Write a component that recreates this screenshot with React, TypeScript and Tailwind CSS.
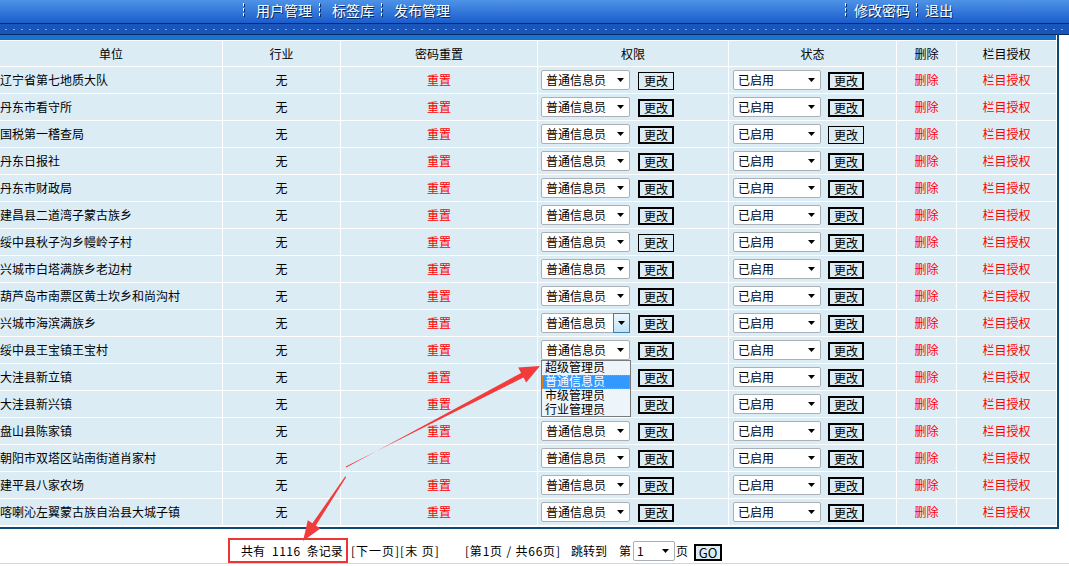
import React from "react";

const units = [
  "辽宁省第七地质大队",
  "丹东市看守所",
  "国税第一稽查局",
  "丹东日报社",
  "丹东市财政局",
  "建昌县二道湾子蒙古族乡",
  "绥中县秋子沟乡幔岭子村",
  "兴城市白塔满族乡老边村",
  "葫芦岛市南票区黄土坎乡和尚沟村",
  "兴城市海滨满族乡",
  "绥中县王宝镇王宝村",
  "大洼县新立镇",
  "大洼县新兴镇",
  "盘山县陈家镇",
  "朝阳市双塔区站南街道肖家村",
  "建平县八家农场",
  "喀喇沁左翼蒙古族自治县大城子镇",
];

const thickA = [false, true, true, true, true, true, false, true, true, true, true, true, true, true, true, true, true];
const thickB = [true, true, false, true, true, true, true, true, true, true, true, true, true, true, true, true, true];

function Tri() {
  return (
    <svg width="7" height="4" viewBox="0 0 7 4" className="block">
      <polygon points="0,0 7,0 3.5,4" fill="#000" />
    </svg>
  );
}

function Select({ text, wide, focused }: { text: string; wide: boolean; focused?: boolean }) {
  return (
    <div
      className={`relative flex h-[20px] items-center rounded-[2px] border border-[#a9b0b8] bg-white ${
        wide ? "w-[89px]" : "w-[88px]"
      }`}
    >
      <span className="pl-[4px] leading-none">{text}</span>
      {focused ? (
        <span className="absolute right-[-1px] top-[-1px] flex h-[20px] w-[17px] items-center justify-center border border-[#3c7fb1] bg-gradient-to-b from-[#eef8fe] to-[#bfe3f6]">
          <Tri />
        </span>
      ) : (
        <span className="absolute right-[5px] top-[7px] flex">
          <Tri />
        </span>
      )}
    </div>
  );
}

function Btn({ thick }: { thick: boolean }) {
  return (
    <div
      className={`flex h-[18px] w-[36px] items-center justify-center border-black bg-[#dcecf5] text-[12px] leading-none ${
        thick ? "border-2" : "border"
      }`}
    >
      更改
    </div>
  );
}

function Sep() {
  return (
    <span className="h-[14px] w-px bg-[repeating-linear-gradient(to_bottom,#ffffff_0px,#ffffff_3px,transparent_3px,transparent_5px)] [filter:drop-shadow(1px_1px_0_#0b2a5c)]" />
  );
}

export default function App() {
  return (
    <div className="relative h-[566px] w-[1069px] overflow-hidden bg-white font-['Noto_Sans_CJK_SC','Noto_Sans',sans-serif] text-[12px] text-black">
      {/* top header */}
      <div className="flex h-[23px] items-start bg-gradient-to-b from-[#4e93e6] to-[#1b5ccc] pt-[3px] text-[14px] leading-none text-white [text-shadow:1px_1px_0_#0b2a5c]">
        <span className="ml-[243px] flex">
          <Sep />
        </span>
        <span className="ml-[12px]">用户管理</span>
        <span className="ml-[7px] flex">
          <Sep />
        </span>
        <span className="ml-[12px]">标签库</span>
        <span className="ml-[7px] flex">
          <Sep />
        </span>
        <span className="ml-[12px]">发布管理</span>
        <span className="ml-[395px] flex">
          <Sep />
        </span>
        <span className="ml-[8px]">修改密码</span>
        <span className="ml-[6px] flex">
          <Sep />
        </span>
        <span className="ml-[8px]">退出</span>
      </div>
      <div className="h-px bg-[#0a2c66]" />
      <div className="flex h-[10px] items-center bg-[#1a55ba]">
        <div className="h-px w-full bg-[repeating-linear-gradient(to_right,transparent_0px,transparent_5px,#7ea8e6_5px,#7ea8e6_7px,transparent_7px,transparent_8px)]" />
      </div>
      <div className="h-px bg-[#0a2c66]" />

      {/* table container */}
      <div className="w-[1059px] border-b-2 border-r-2 border-[#0d4a72] bg-white pb-[2px] pr-px">
        <div className="h-[5px] bg-[#1872d0]" />
        <div className="grid grid-cols-[222px_117px_196px_190px_167px_59px_99px] gap-px bg-white pt-px">
          {["单位", "行业", "密码重置", "权限", "状态", "删除", "栏目授权"].map((h) => (
            <div key={h} className="flex h-[25px] items-center justify-center bg-[#dcecf5]">
              {h}
            </div>
          ))}
          {units.map((u, i) => (
            <React.Fragment key={u}>
              <div className="flex h-[26px] items-center bg-[#dcecf5] pl-0">{u}</div>
              <div className="flex h-[26px] items-center justify-center bg-[#dcecf5]">无</div>
              <div className="flex h-[26px] items-center justify-center bg-[#dcecf5] text-[#ff0000]">重置</div>
              <div className="flex h-[26px] items-center bg-[#dcecf5] pl-[3px]">
                {i === 11 || i === 12 ? (
                  <div className="h-[20px] w-[89px]" />
                ) : (
                  <Select text="普通信息员" wide focused={i === 9} />
                )}
                <div className="ml-[8px] mt-[2px]">
                  <Btn thick={thickA[i]} />
                </div>
              </div>
              <div className="flex h-[26px] items-center bg-[#dcecf5] pl-[4px]">
                <Select text="已启用" wide={false} />
                <div className="ml-[7px] mt-[2px]">
                  <Btn thick={thickB[i]} />
                </div>
              </div>
              <div className="flex h-[26px] items-center justify-center bg-[#dcecf5] text-[#ff0000]">删除</div>
              <div className="flex h-[26px] items-center justify-center bg-[#dcecf5] text-[#ff0000]">栏目授权</div>
            </React.Fragment>
          ))}
        </div>
      </div>

      {/* pagination */}
      <div className="h-[34px] pt-[9px]">
        <div className="flex h-[25px] items-center whitespace-pre leading-none">
          <div className="ml-[228px] flex h-[25px] w-[120px] items-center border-2 border-[#ee3535] pl-[11px]">
            <span>共有</span>
            <span className="ml-[7px] tracking-[0.5px]">1116</span>
            <span className="ml-[6px]">条记录</span>
          </div>
          <span className="ml-[3px] w-[114px] tracking-[1px]">[下一页][末 页]</span>
          <span className="w-[106px] tracking-[0.8px]">[第1页 / 共66页]</span>
          <span className="w-[48px]">跳转到</span>
          <span className="w-[14px]">第</span>
          <div className="relative flex h-[20px] w-[42px] items-center rounded-[2px] border border-[#a9b0b8] bg-white">
            <span className="pl-[3px]">1</span>
            <span className="absolute right-[5px] top-[7px] flex">
              <Tri />
            </span>
          </div>
          <span className="ml-px w-[18px]">页</span>
          <div className="mt-[4px] flex h-[17px] w-[28px] items-center justify-center border-2 border-black bg-[#dcecf5] text-[13px]">
            GO
          </div>
        </div>
      </div>
      <div className="h-px bg-[#d6d6d6]" />

      {/* dropdown list */}
      <div className="absolute left-[541px] top-[360px] h-[57px] w-[90px] border border-[#7a7a7a] bg-[#edf4fa] font-['Liberation_Sans','Noto_Sans_CJK_SC',sans-serif] leading-none">
        <div className="flex h-[14px] items-center pl-[3px]">超级管理员</div>
        <div className="flex h-[14px] items-center border border-dotted border-[#f08a24] bg-[#3399ff] pl-[2px] text-white">
          普通信息员
        </div>
        <div className="flex h-[14px] items-center pl-[3px]">市级管理员</div>
        <div className="flex h-[14px] items-center pl-[3px]">行业管理员</div>
      </div>

      {/* red annotation arrows */}
      <svg className="pointer-events-none absolute left-0 top-0" width="1069" height="566">
        <polygon
          points="346.2,467.6 521.1,373 518.2,367.6 540,366 526.2,382.4 523.5,377.4 345.8,466.4"
          fill="#f23b3b"
        />
        <polygon
          points="346.1,477.2 315.8,525.5 320.4,528.6 303,541 307.8,520.3 312.4,523.3 345.3,476.2"
          fill="#f23b3b"
        />
      </svg>
    </div>
  );
}
